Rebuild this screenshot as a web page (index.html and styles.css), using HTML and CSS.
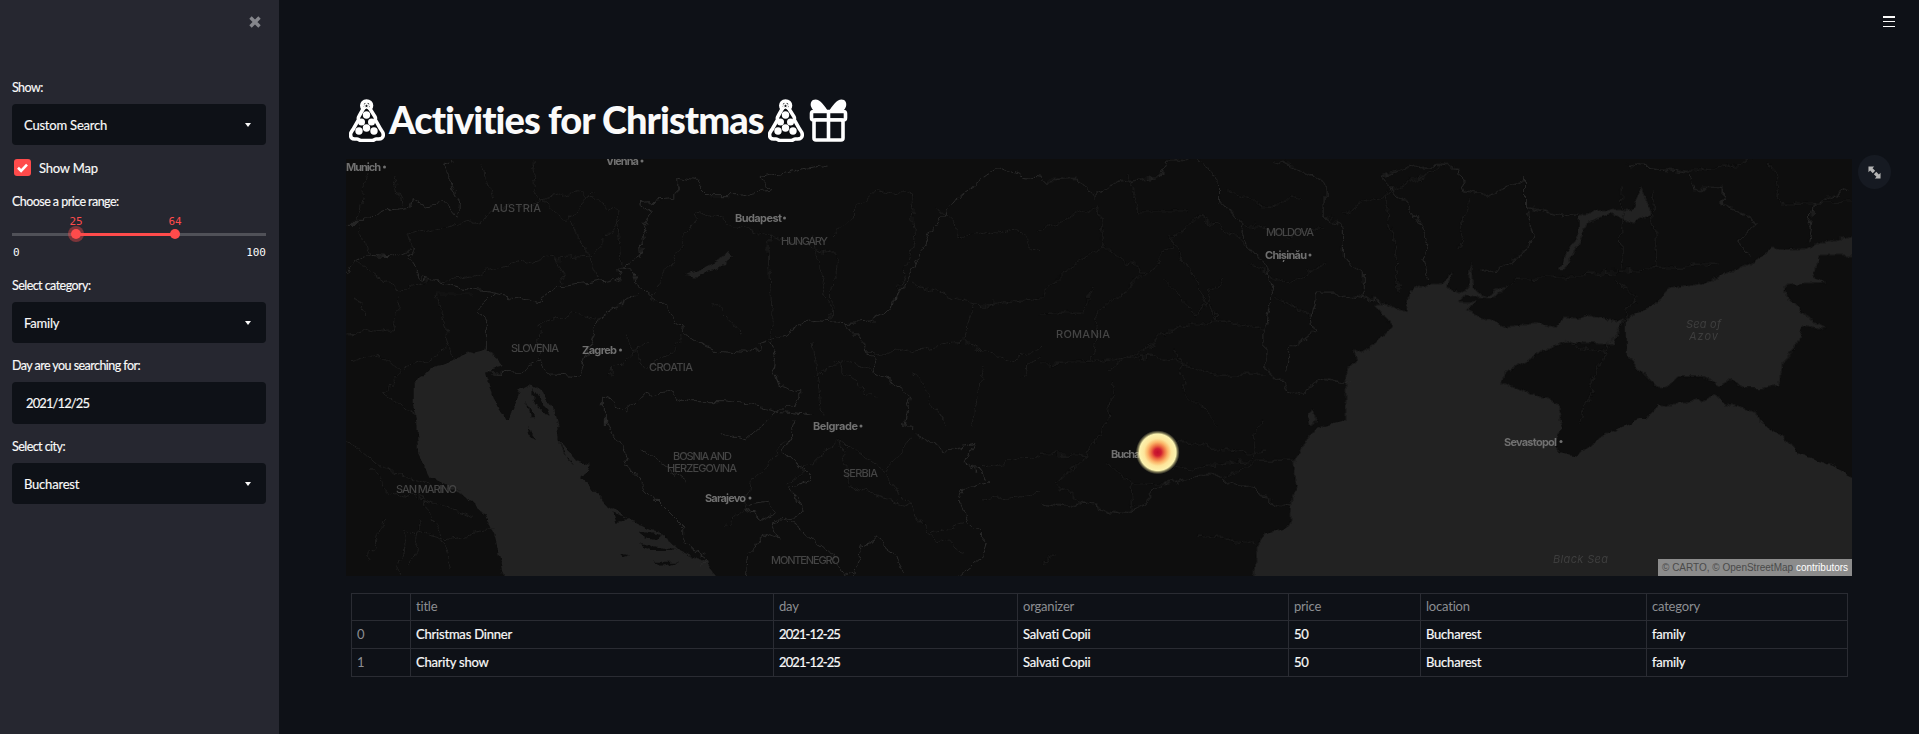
FILE: index.html
```html
<!DOCTYPE html>
<html lang="en">
<head>
<meta charset="utf-8">
<title>Activities for Christmas</title>
<link rel="stylesheet" href="styles.css">
</head>
<body>
<div class="app">
  <aside class="sidebar">
    <div class="side-head">
      <svg class="close" viewBox="0 0 12 12"><path d="M1.500 1.500l9 9M10.500 1.500l-9 9"/></svg>
    </div>
    <div class="field">
      <div class="label">Show:</div>
      <div class="select"><span>Custom Search</span><i class="caret"></i></div>
    </div>
    <label class="check">
      <span class="box"><svg viewBox="0 0 17 17"><path d="M4 8.800l3.100 3L13 5.600"/></svg></span>
      <span>Show Map</span>
    </label>
    <div class="field slider-field">
      <div class="label">Choose a price range:</div>
      <div class="slider">
        <div class="track">
          <div class="fill" style="left:25.2%;width:39%"></div>
          <div class="thumb halo" style="left:25.2%"><span class="val">25</span></div>
          <div class="thumb" style="left:64.2%"><span class="val">64</span></div>
        </div>
        <div class="ends"><span>0</span><span>100</span></div>
      </div>
    </div>
    <div class="field">
      <div class="label">Select category:</div>
      <div class="select"><span>Family</span><i class="caret"></i></div>
    </div>
    <div class="field">
      <div class="label">Day are you searching for:</div>
      <div class="select date"><span>2021/12/25</span></div>
    </div>
    <div class="field">
      <div class="label">Select city:</div>
      <div class="select"><span>Bucharest</span><i class="caret"></i></div>
    </div>
  </aside>
  <main class="main">
    <div class="burger"><i></i><i></i><i></i></div>
    <h1 class="title">
      <svg class="tree" viewBox="0 0 36 43"><use href="#tree"/></svg>
      <span class="title-text">Activities for Christmas</span>
      <svg class="tree tree2" viewBox="0 0 36 43">
        <g id="tree">
          <path class="tree-body" d="M17.500 2c3 0 5 2.200 5 4.600 0 1.500-.6 2.600-1.400 3.400l4.900 7.700c.8 1.300.4 2.300.2 3l5.100 9c1 1.800 3 3.300 3 6 0 2.800-2 4.300-4.500 4.300h-2.500c-1.500 0-2.500 1.500-4 1.500H12c-1.500 0-2.500-1.500-4-1.500H5.500C3 40 1.500 38.500 1.500 35.700c0-2.700 1.900-4.200 3-6l5.100-9c-.2-.7-.6-1.700.2-3l4.300-7.700c-.8-.8-1.300-1.900-1.300-3.400C12.800 4.200 14.500 2 17.500 2z"/>
          <path class="tree-star" d="M17.500 3.500l1 2.300 2.300.2-1.800 1.500.6 2.400-2.100-1.300-2.100 1.300.6-2.400L14.200 6l2.300-.2z"/>
          <circle class="ball" cx="17.500" cy="16" r="3.700"/>
          <circle class="ball" cx="12.500" cy="23" r="3.500"/>
          <circle class="ball" cx="22.500" cy="23" r="3.500"/>
          <circle class="ball" cx="17.500" cy="29" r="3.700"/>
          <circle class="ball" cx="10" cy="32" r="3.700"/>
          <circle class="ball" cx="25" cy="32" r="3.700"/>
        </g>
      </svg>
      <svg class="gift" viewBox="0 0 39 43">
        <path class="gift-bow" d="M19.500 13C16 7 11 .5 6.500.5 2.500.5 1 4 2 7.500 3 11 6 13 8 13zM19.500 13C23 7 28 .5 32.500.5c4 0 5.500 3.500 4.500 7-1 3.500-4 5.500-6 5.500z"/>
        <rect class="gift-line" x="2.500" y="12.500" width="34" height="8.500" rx="2"/>
        <rect class="gift-line" x="5" y="21" width="29" height="20" rx="2"/>
        <path class="gift-line" d="M19.500 12.500V41"/>
      </svg>
    </h1>
    <section class="map-wrap">
      <div class="expand"><svg viewBox="0 0 14 14"><path d="M.5.5h6.200L4.900 2.300l2.800 2.800-2.600 2.600-2.800-2.800L.5 6.700zM13.500 13.500H7.300l1.800-1.800-2.800-2.800 2.600-2.600 2.800 2.800 1.800-1.800z"/></svg></div>
      <svg class="map" viewBox="346 159 1506 417" preserveAspectRatio="none">
        <defs>
          <radialGradient id="heat">
            <stop offset="0" stop-color="#c00d2b"/>
            <stop offset=".16" stop-color="#cf1d31"/>
            <stop offset=".3" stop-color="#ec6a40"/>
            <stop offset=".46" stop-color="#fbb468"/>
            <stop offset=".62" stop-color="#fde59a"/>
            <stop offset=".83" stop-color="#fcf3b0"/>
            <stop offset=".9" stop-color="#f0e69f" stop-opacity=".5"/>
            <stop offset="1" stop-color="#e8de9a" stop-opacity="0"/>
          </radialGradient>
          <filter id="coast" filterUnits="userSpaceOnUse" x="330" y="140" width="1540" height="460">
            <feTurbulence type="fractalNoise" baseFrequency=".09" numOctaves="3" seed="7" result="n"/>
            <feDisplacementMap in="SourceGraphic" in2="n" scale="7" xChannelSelector="R" yChannelSelector="G"/>
          </filter>
          <filter id="wig" filterUnits="userSpaceOnUse" x="330" y="140" width="1540" height="460">
            <feTurbulence type="fractalNoise" baseFrequency=".07" numOctaves="3" seed="3" result="n"/>
            <feDisplacementMap in="SourceGraphic" in2="n" scale="13" xChannelSelector="R" yChannelSelector="G"/>
            <feGaussianBlur stdDeviation=".25"/>
          </filter>
          <filter id="soft"><feGaussianBlur stdDeviation=".3"/></filter>
        </defs>
        <rect class="land" x="346" y="159" width="1506" height="417"/>

        <g filter="url(#coast)">
          <g transform="translate(340 155) scale(.4464 .3333)">
            <path class="water" d="M165 680L210 635 265 610 285 590 300 595 330 585 350 610 365 630 345 640 325 650 335 700 350 750 375 805 405 700 425 685 450 710 480 760 490 815H175L165 740z"/>
            <path class="water" d="M770 360L800 350 850 315 870 288 880 305 860 330 800 365z"/>
            <path class="land" d="M430 700L450 740 470 775 455 770 435 740zM420 740L435 790 425 790z"/>
          </g>
          <g transform="translate(340 420) scale(.4464 .3333)">
            <path class="water" d="M170 0L175 100 200 170 270 220 320 280 345 340 372 500H860L820 430 760 390 720 340 650 300 600 260 540 170 560 135 530 120 490 60 485 0z"/>
            <path class="land" d="M672 335L725 345 710 360 680 355zM670 372L755 390 700 390zM628 402L648 405 635 412zM700 425L760 425 720 437zM610 280L650 300 620 305zM490 60L510 120 525 135 500 100zM420 20L440 60 425 50z"/>
          </g>
          <g transform="translate(1040 155) scale(.523 .3333)">
            <path class="water" d="M585 815V650L605 620 600 580 615 590 640 565 675 512 640 450 660 450 700 470 705 410 740 388 770 385 790 345 780 395 800 410 820 400 825 315 830 400 850 425 895 385 875 420 860 430 810 420 800 440 835 440 815 465 855 490 885 515 950 505 990 520 1000 485 1030 490 1050 475 1100 500 1115 490 1100 570 1000 560 960 590 890 650 885 685 950 720 990 745 995 815z"/>
            <path class="water" d="M1120 490L1150 470 1175 445 1205 400 1270 380 1310 355 1365 320 1395 285 1465 280 1500 260 1600 235V300H1490L1480 365 1500 385 1425 390 1430 430 1470 490 1505 525 1460 510 1445 580 1420 620 1415 690 1380 700 1350 700 1320 670 1300 690 1270 665 1220 665 1200 695 1180 700 1150 650 1120 600z"/>
            <path class="water" d="M1145 815L1180 755 1250 740 1290 720 1310 745 1370 770 1380 815z"/>
            <path class="water" d="M1030 180L1090 160 1130 170 1150 100 1170 175 1135 205 1090 175 1050 200 1030 270 1005 340 990 340 1030 230z"/>
            <path class="water" d="M510 780L525 760 530 800 515 810z"/>
          </g>
          <g transform="translate(1040 420) scale(.523 .3333)">
            <path class="water" d="M585 0L530 20 505 70 485 130 490 200 478 255 480 300 470 325 430 340 415 380 408 500H1620V175H1560L1520 140 1450 100 1420 50 1375 0H1145L1100 25 1060 70 1030 108 990 95 985 60 1000 30 990 0z"/>
          </g>
        </g>

        <g filter="url(#wig)">
          <g transform="translate(340 155) scale(.4464 .3333)">
            <g class="b-strong">
              <path d="M12 205L60 205 90 170 160 152 165 130 190 150 230 140 262 190 268 150 245 60 232 30 250 12"/>
              <path d="M12 355L30 320 60 300 110 305 165 280 155 310 185 370 230 385 300 405 345 415 400 430 445 440 490 395 560 385 610 370 625 380 620 340 655 335 665 385 705 435 750 490 780 540 820 575 860 590 910 595 945 560 990 540 1040 500 1080 495 1130 500 1190 495 1240 460 1255 400 1300 300 1330 220 1365 160 1390 120 1445 70 1480 35 1530 65 1568 70"/>
              <path d="M625 335L680 295 675 240 700 170 670 140 750 130 750 60 790 70 830 125 890 125 960 105 950 70 1040 40 1090 30"/>
              <path d="M345 415L305 465 330 510 330 585M330 650L400 655 450 620 480 660 530 665 545 620 575 500 650 425 665 410"/>
              <path d="M960 560L975 600 970 640 985 690 1030 710 1030 730 990 760 960 800"/>
              <path d="M590 810L590 720 640 770 680 720 730 710 780 740 860 740 940 755 990 770 1060 780"/>
              <path d="M1130 500L1190 590 1200 650 1280 720 1265 810"/>
            </g>
            <g class="b-faint">
              <path d="M150 240L270 210 400 150 530 110 620 160 630 330"/>
              <path d="M30 320L130 400 200 380 320 350 480 300 500 380"/>
              <path d="M20 540L120 520 130 420M250 600L220 420 300 420M440 510L520 470 570 500"/>
              <path d="M700 430L800 170 960 240 970 560M960 240L1110 300 1100 490 1060 250"/>
              <path d="M1060 560L1080 780M1130 500L1200 600 1400 560 1500 620 1568 580"/>
              <path d="M1340 160L1400 250 1500 220 1568 290M1280 380L1420 450 1568 430M1420 450L1400 560"/>
              <path d="M1200 100L1280 120 1290 250 1250 400M1100 240L1200 100"/>
              <path d="M1440 630L1420 810M1530 660L1568 600M1280 650L1360 810"/>
              <path d="M60 60L40 200 70 300M120 60L140 150M320 30L340 130M430 20L440 120 510 200 560 110"/>
              <path d="M630 200L560 300 480 310M520 200L580 370M150 240L160 280M640 540L680 640 740 600 770 540"/>
              <path d="M450 510L440 620M600 660L690 560M830 440L900 540M1100 620L1200 730M1060 660L1130 620 1200 650"/>
              <path d="M20 620L80 600 140 640 100 720 170 780M60 480L30 420M150 640L200 620 250 560"/>
            </g>
          </g>
          <g transform="translate(340 420) scale(.4464 .3333)">
            <g class="b-strong">
              <path d="M590 0L640 100 650 150 710 240 770 320 770 370 820 420 800 430"/>
              <path d="M1020 0L995 100 1055 180 1010 200 1040 270 1020 290 980 300 970 310 1005 300 1100 400 1130 467"/>
              <path d="M970 310L985 360 950 345 920 400 915 467M1200 360L1170 380 1160 440 1130 467M1200 360L1240 400 1270 467"/>
              <path d="M1265 0L1300 50 1360 90 1420 70 1400 130 1460 180 1395 210 1385 240 1410 310 1450 370 1440 410 1390 467"/>
              <path d="M675 85L770 180M855 40L910 60 960 0M905 260L960 250 980 275 950 295 905 270"/>
            </g>
            <g class="b-faint">
              <path d="M12 70L130 160 270 220M70 145L100 210 190 240 300 290M190 240L230 360 250 440M130 467L150 330 230 360 340 330"/>
              <path d="M860 320L905 270 915 190 955 140 1000 60M1000 190L1120 60 1220 160 1320 340 1400 390"/>
              <path d="M1320 340L1400 310M1430 140L1568 110M1440 240L1568 220"/>
              <path d="M1120 60L1140 200 1280 260M100 300L60 420M180 300L160 440M1220 160L1280 60"/>
            </g>
          </g>
          <g transform="translate(1040 155) scale(.523 .3333)">
            <g class="b-strong">
              <path d="M0 75L70 70 105 130 135 85 230 65 245 15 300 12"/>
              <path d="M305 12L345 90 345 140 380 200 400 270 435 340 445 400 430 520 430 640 450 670 495 715 540 670 590 680"/>
              <path d="M500 50L545 90 545 180 580 220 580 310 620 350 620 430 660 450M620 430L570 420 530 420 520 480 525 530 480 580 470 650"/>
              <path d="M650 60L700 150 740 250 730 320 745 380M450 12L500 50M650 60L720 30 800 40 810 110 850 120 930 70"/>
              <path d="M930 60L930 160 1000 185 1030 175M1120 30L1240 50 1250 100 1310 100 1310 150 1370 200 1330 260 1360 310"/>
              <path d="M1550 95L1480 150 1470 270M930 160L945 240 925 290 880 340 840 350"/>
            </g>
            <g class="b-faint">
              <path d="M0 230L110 150 120 270 200 360 300 180 400 270M120 270L40 360 0 430"/>
              <path d="M200 360L110 470 100 620M250 250L340 500 260 520 130 640M340 500L430 520"/>
              <path d="M0 630L100 625 210 600 340 660 430 660M140 680L130 810M260 590L280 720 340 810"/>
              <path d="M580 170L660 120 760 40M660 120L690 420M900 380L1100 350 1180 340 1300 330"/>
              <path d="M1110 340L1115 100M1100 370L1140 430 1080 590M1180 340L1170 100"/>
              <path d="M1000 560L1080 590 1030 810"/>
              <path d="M360 110L430 150 500 130M380 200L470 240 540 220M400 330L480 380 540 330M450 430L520 480"/>
              <path d="M170 60L190 170 280 170M0 480L80 470 100 400M240 380L300 480 350 360"/>
              <path d="M820 130L800 280M1240 50L1360 20M1400 30L1420 150 1550 140"/>
            </g>
          </g>
          <g transform="translate(1040 420) scale(.523 .3333)">
            <g class="b-strong">
              <path d="M0 250L50 265 80 250 110 260 155 282 200 255 235 195 300 170 345 170 360 190 410 205 420 235 478 255"/>
            </g>
            <g class="b-faint">
              <path d="M0 100L90 110 130 0M90 110L30 190 80 250M130 130L175 190 180 265M175 190L235 195"/>
              <path d="M255 150L400 120 420 0M350 170L420 120 490 120M305 345L410 370M0 430L30 405"/>
              <path d="M260 60L360 90 430 100"/>
            </g>
          </g>
        </g>

        <g filter="url(#soft)">
          <g class="m-city">
            <text x="346" y="170.500" textLength="35">Munich</text><circle cx="384.500" cy="167" r="1.500"/>
            <text x="606" y="165" textLength="33">Vienna</text><circle cx="642" cy="161" r="1.500"/>
            <text x="735" y="222" textLength="47">Budapest</text><circle cx="784.500" cy="218" r="1.500"/>
            <text x="582" y="354" textLength="35">Zagreb</text><circle cx="620.500" cy="350" r="1.500"/>
            <text x="813" y="430" textLength="45">Belgrade</text><circle cx="861" cy="426" r="1.500"/>
            <text x="705" y="502" textLength="41">Sarajevo</text><circle cx="750" cy="498" r="1.500"/>
            <text x="1265" y="259" textLength="42">Chișinău</text><circle cx="1310" cy="255" r="1.500"/>
            <text x="1111" y="458" textLength="46">Bucharest</text>
            <text x="1504" y="445.500" textLength="53">Sevastopol</text><circle cx="1561" cy="441.500" r="1.500"/>
          </g>
          <g class="m-country">
            <text x="492" y="212" textLength="49">AUSTRIA</text>
            <text x="781" y="245" textLength="47">HUNGARY</text>
            <text x="511" y="352" textLength="48">SLOVENIA</text>
            <text x="649" y="371" textLength="44">CROATIA</text>
            <text x="673" y="460" textLength="59">BOSNIA AND</text>
            <text x="667" y="472" textLength="70">HERZEGOVINA</text>
            <text x="843" y="477" textLength="35">SERBIA</text>
            <text x="396" y="493" textLength="61">SAN MARINO</text>
            <text x="771" y="564" textLength="69">MONTENEGRO</text>
            <text x="1266" y="236" textLength="48">MOLDOVA</text>
            <text x="1056" y="338" textLength="54">ROMANIA</text>
          </g>
          <g class="m-sea">
            <text x="1686" y="328" textLength="36">Sea of</text>
            <text x="1689" y="340" textLength="30">Azov</text>
            <text x="1553" y="563" textLength="56">Black Sea</text>
          </g>
        </g>
        <circle cx="1157.700" cy="452.300" r="22" fill="url(#heat)"/>
      </svg>
      <div class="attrib">© CARTO, © OpenStreetMap <b>contributors</b></div>
    </section>
    <table class="data">
      <colgroup>
        <col class="c0"><col class="c1"><col class="c2"><col class="c3"><col class="c4"><col class="c5"><col class="c6">
      </colgroup>
      <thead>
        <tr><th></th><th>title</th><th>day</th><th>organizer</th><th>price</th><th>location</th><th>category</th></tr>
      </thead>
      <tbody>
        <tr><th>0</th><td>Christmas Dinner</td><td class="date-cell">2021-12-25</td><td>Salvati Copii</td><td>50</td><td>Bucharest</td><td>family</td></tr>
        <tr><th>1</th><td>Charity show</td><td class="date-cell">2021-12-25</td><td>Salvati Copii</td><td>50</td><td>Bucharest</td><td>family</td></tr>
      </tbody>
    </table>
  </main>
</div>
</body>
</html>
```
FILE: styles.css
```css
* { box-sizing: border-box; }
html, body { margin: 0; height: 100%; overflow: hidden; }
body {
  background: #0e1117;
  color: #fafafa;
  font-family: Lato, "Noto Sans", sans-serif;
  font-size: 14px;
}
.app { display: flex; height: 734px; }

.sidebar {
  width: 279px;
  flex: none;
  background: #262730;
  padding: 0 13px 0 12px;
}
.side-head { display: flex; justify-content: flex-end; height: 78px; padding: 16px 5px 0 0; }
.close { width: 12px; height: 12px; }
.close path { stroke: #85868c; stroke-width: 3.400; fill: none; }

.field { margin-bottom: 13px; }
.label { height: 20px; line-height: 20px; font-size: 12.500px; letter-spacing: -.55px; margin-bottom: 6px; -webkit-text-stroke: .15px #fafafa; }
.select {
  height: 41px;
  background: #0e1117;
  border-radius: 4px;
  display: flex;
  align-items: center;
  justify-content: space-between;
  padding: 0 15px 0 12px;
  font-size: 13px;
  letter-spacing: -.2px;
  -webkit-text-stroke: .15px #fafafa;
}
.select.date { height: 42px; padding-left: 14px; letter-spacing: -.9px; }
.caret { width: 0; height: 0; border: 3px solid transparent; border-top: 4px solid #fafafa; border-bottom: 0; }

.check { display: flex; align-items: center; gap: 8px; height: 17px; margin: 14px 0 16px 2px; font-size: 13px; letter-spacing: -.2px; -webkit-text-stroke: .15px #fafafa; }
.box { width: 17px; height: 17px; background: #ff4b4b; border-radius: 3px; display: block; }
.box svg { display: block; width: 17px; height: 17px; }
.box path { fill: none; stroke: #fff; stroke-width: 2.600; }

.slider-field { margin-bottom: 15px; }
.slider-field .label { margin-bottom: 0; }
.slider { padding-top: 21px; }
.track { position: relative; height: 3px; background: rgba(250, 250, 250, .2); }
.fill { position: absolute; top: 0; height: 3px; background: #ff4b4b; }
.thumb {
  position: absolute;
  top: -4px;
  width: 10px;
  height: 10px;
  margin-left: -5px;
  border-radius: 50%;
  background: #ff4b4b;
}
.thumb.halo { box-shadow: 0 0 0 3px rgba(255, 75, 75, .4); }
.val {
  position: absolute;
  left: 50%;
  bottom: 11px;
  transform: translateX(-50%);
  font: 11px "DejaVu Sans Mono", monospace;
  color: #ff4b4b;
}
.ends {
  display: flex;
  justify-content: space-between;
  margin-top: 9px;
  height: 16px;
  font: 11px/16px "DejaVu Sans Mono", monospace;
  padding-left: 1px;
}

.main { flex: 1; min-width: 0; position: relative; padding: 94px 67px 0; }
.burger { position: absolute; top: 16px; right: 24px; width: 12px; height: 11px; display: flex; flex-direction: column; justify-content: space-between; }
.burger i { display: block; height: 1.500px; background: #fafafa; }

.title {
  display: flex;
  align-items: center;
  height: 52px;
  margin: 0 0 13px;
  padding-left: 3px;
  font-size: 38px;
  font-weight: 900;
  letter-spacing: -.95px;
  white-space: nowrap;
}
.title-text { margin: 0 4px; padding-bottom: 2px; }
.tree { width: 36px; height: 43px; flex: none; }
.tree-body { fill: #0a0c10; stroke: #fff; stroke-width: 3.600; stroke-linejoin: round; }
.tree-star { fill: #0a0c10; stroke: #fff; stroke-width: 1.400; }
.ball { fill: #fff; }
.gift { width: 39px; height: 43px; flex: none; margin-left: 5px; }
.gift-bow { fill: #fff; }
.gift-line { fill: #0e1117; stroke: #fff; stroke-width: 3.600; }

.map-wrap { position: relative; height: 417px; margin-bottom: 17px; }
.map { display: block; width: 100%; height: 417px; }
.land { fill: #0e0e0e; }
.water { fill: #202020; }
.b-strong path { fill: none; stroke: #2a2a2a; stroke-width: 1; vector-effect: non-scaling-stroke; }
.b-faint path { fill: none; stroke: #1c1c1c; stroke-width: 1; vector-effect: non-scaling-stroke; }
.m-city text { font: 700 11px Inter, "Liberation Sans", sans-serif; fill: #707070; }
.m-city circle { fill: #707070; }
.m-country text { font: 500 11px Inter, "Liberation Sans", sans-serif; fill: #444; }
.m-sea text { font: italic 400 11px Inter, "Liberation Sans", sans-serif; fill: #3e3e3e; letter-spacing: 1px; }
.attrib {
  position: absolute;
  right: 0;
  bottom: 0;
  height: 17px;
  width: 194px;
  padding-left: 4px;
  background: #8c8c8c;
  color: #4a4a4a;
  font: 10px/17px "Liberation Sans", sans-serif;
  white-space: nowrap;
}
.attrib b { color: #fff; font-weight: 400; }
.expand {
  position: absolute;
  right: -39px;
  top: -4px;
  width: 33px;
  height: 34px;
  border-radius: 50%;
  background: #161a22;
  display: flex;
  align-items: center;
  justify-content: center;
}
.expand svg { width: 13px; height: 13px; }
.expand path { fill: #b5b5b5; }

.data {
  border-collapse: collapse;
  table-layout: fixed;
  width: 1496px;
  margin-left: 5px;
  font-size: 13px;
}
.c0 { width: 59px; }
.c1 { width: 363px; }
.c2 { width: 244px; }
.c3 { width: 271px; }
.c4 { width: 132px; }
.c5 { width: 226px; }
.c6 { width: 201px; }
.data th, .data td {
  height: 28px;
  padding: 0 5px 2px 5px;
  border: 1px solid #2a2c33;
  text-align: left;
  font-weight: 400;
  white-space: nowrap;
  letter-spacing: -.2px;
}
.data thead th { height: 27px; color: #8c8e92; }
.data tbody th { color: #8c8e92; }
.data td { color: #fafafa; -webkit-text-stroke: .2px #fafafa; }
.data .date-cell { letter-spacing: -.9px; }
```
